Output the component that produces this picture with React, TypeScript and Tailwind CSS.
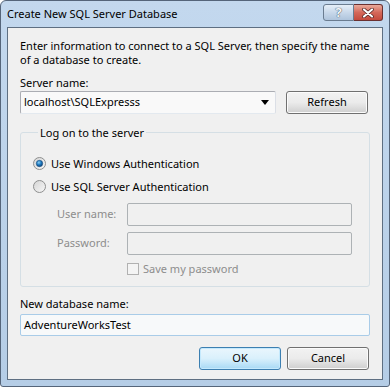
const font = { fontFamily: '"Segoe UI", "Noto Sans", "Open Sans", sans-serif' };

const Radio = ({ checked }: { checked?: boolean }) => (
  <svg width="13" height="13" viewBox="0 0 13 13" className="shrink-0">
    <defs>
      <linearGradient id={checked ? "rgOn" : "rgOff"} x1="0" y1="0" x2="1" y2="1">
        <stop offset="0" stopColor="#d4d4d4" />
        <stop offset="1" stopColor="#f8f8f8" />
      </linearGradient>
      <radialGradient id="dot" cx="0.4" cy="0.35" r="0.7">
        <stop offset="0" stopColor="#8fd0f3" />
        <stop offset="0.5" stopColor="#1b7ac2" />
        <stop offset="1" stopColor="#0d3d71" />
      </radialGradient>
    </defs>
    <circle cx="6.5" cy="6.5" r="6" fill={`url(#${checked ? "rgOn" : "rgOff"})`} stroke="#8e8f8f" />
    {checked && <circle cx="6.5" cy="6.5" r="3.2" fill="url(#dot)" stroke="#1d4f80" strokeWidth="0.6" />}
  </svg>
);

const Button = ({ label, primary }: { label: string; primary?: boolean }) => (
  <button
    className={
      primary
        ? "w-[82px] h-[23px] rounded-[3px] border border-[#3c7fb1] bg-gradient-to-b from-[#eaf6fd] via-[#d9f0fc] to-[#a7d9f5] text-[11px] text-black shadow-[inset_0_0_0_1px_#c4e9fd]"
        : "w-[82px] h-[23px] rounded-[3px] border border-[#707070] bg-gradient-to-b from-[#f2f2f2] via-[#ebebeb] to-[#cfcfcf] text-[11px] text-black shadow-[inset_0_0_0_1px_#fbfbfb]"
    }
  >
    {label}
  </button>
);

export default function App() {
  return (
    <div
      style={font}
      className="w-[390px] h-[387px] bg-gradient-to-b from-[#c3d8ee] to-[#b5cde6] border border-[#55657a] rounded-t-[6px] rounded-b-[3px] flex flex-col px-[6px] pb-[6px] text-[11px] text-black"
    >
      {/* title bar */}
      <div className="h-[26px] flex items-center justify-between">
        <span className="text-[11px] text-[#000] leading-none -mt-[1px]">Create New SQL Server Database</span>
        <div className="flex self-start mt-[3px]">
          <div className="w-[31px] h-[17px] rounded-l-[3px] border border-[#6a7c90] bg-gradient-to-b from-[#e6eff8] via-[#c8d8ea] to-[#aec4dc] flex items-center justify-center">
            <span className="text-[13px] font-bold text-[#f4f7fa] leading-none [text-shadow:0_0_1px_#40505f,0_0_1px_#40505f]">?</span>
          </div>
          <div className="w-[29px] h-[17px] rounded-r-[3px] border border-l-0 border-[#6a3030] bg-gradient-to-b from-[#e9a99b] via-[#d4685a] to-[#c44a3d] flex items-center justify-center">
            <svg width="12" height="10" viewBox="0 0 12 10">
              <path d="M2 1.5 L10 8.5 M10 1.5 L2 8.5" stroke="#4a2020" strokeWidth="3.6" strokeLinecap="round" />
              <path d="M2 1.5 L10 8.5 M10 1.5 L2 8.5" stroke="#ffffff" strokeWidth="2.2" strokeLinecap="round" />
            </svg>
          </div>
        </div>
      </div>

      {/* client area */}
      <div className="flex-1 bg-[#f0f0f0] border border-[#5e6f82] px-[12px] pt-[11px] flex flex-col">
        <p className="leading-[14px]">
          Enter information to connect to a SQL Server, then specify the name of a database to create.
        </p>

        <label className="mt-[8px] leading-[15px]">Server name:</label>
        <div className="mt-[1px] flex gap-[10px]">
          <div className="w-[266px] h-[23px] border border-[#abadb3] border-r-[#dbdfe6] border-b-[#e3e9ef] bg-[#f9f9f9] rounded-[2px] flex items-center pl-[3px] pr-[6px]">
            <span className="flex-1">localhost\SQLExpresss</span>
            <svg width="8" height="5" viewBox="0 0 8 5">
              <path d="M0 0 H8 L4 5 Z" fill="#000" />
            </svg>
          </div>
          <div className="ml-auto mr-[2px]">
            <Button label="Refresh" />
          </div>
        </div>

        <fieldset className="mt-[11px] border border-[#d5dfe5] rounded-[3px] pl-[12px] pr-[17px] pb-[10px]">
          <legend className="ml-[5px] px-[2px] leading-[15px]">Log on to the server</legend>
          <div className="mt-[16px] flex items-center gap-[5px] leading-[15px]">
            <Radio checked />
            <span>Use Windows Authentication</span>
          </div>
          <div className="mt-[8px] flex items-center gap-[5px] leading-[15px]">
            <Radio />
            <span>Use SQL Server Authentication</span>
          </div>
          <div className="mt-[9px] flex items-center pl-[24px]">
            <span className="w-[70px] text-[#8d8d8d]">User name:</span>
            <div className="flex-1 h-[23px] border border-[#adb2b5] rounded-[2px] bg-[#f0f0f0]" />
          </div>
          <div className="mt-[6px] flex items-center pl-[24px]">
            <span className="w-[70px] text-[#8d8d8d]">Password:</span>
            <div className="flex-1 h-[23px] border border-[#adb2b5] rounded-[2px] bg-[#f0f0f0]" />
          </div>
          <div className="mt-[6px] flex items-center gap-[4px] pl-[94px] leading-[15px]">
            <div className="w-[12px] h-[12px] border border-[#b1b1b1] bg-[#f4f4f4]" />
            <span className="text-[#8d8d8d]">Save my password</span>
          </div>
        </fieldset>

        <label className="mt-[9px] leading-[15px]">New database name:</label>
        <div className="mt-[3px] h-[22px] border border-[#a9cce8] bg-[#f7f9fa] rounded-[2px] flex items-center pl-[3px]">
          AdventureWorksTest
        </div>

        <div className="mt-[11px] flex justify-end gap-[6px] mr-[1px]">
          <Button label="OK" primary />
          <Button label="Cancel" />
        </div>
      </div>
    </div>
  );
}
